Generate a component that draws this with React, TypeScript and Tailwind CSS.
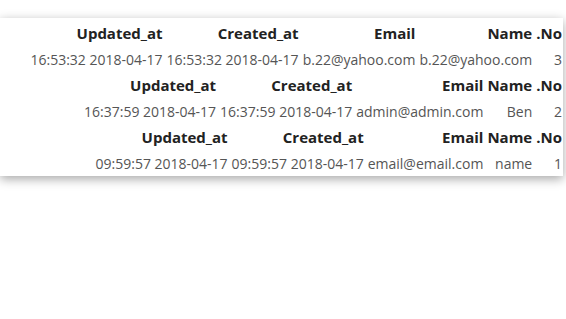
import React from 'react'

type Row = {
  no: string
  name: string
  email: string
  created: string
  updated: string
}

const rows: Row[] = [
  { no: '3', name: 'b.22@yahoo.com', email: 'b.22@yahoo.com', created: '2018-04-17 16:53:32', updated: '2018-04-17 16:53:32' },
  { no: '2', name: 'Ben', email: 'admin@admin.com', created: '2018-04-17 16:37:59', updated: '2018-04-17 16:37:59' },
  { no: '1', name: 'name', email: 'email@email.com', created: '2018-04-17 09:59:57', updated: '2018-04-17 09:59:57' },
]

function UserTable({ row }: { row: Row }) {
  const th = 'h-[26px] px-[2px] text-right text-[15px] font-bold text-[#222] whitespace-nowrap'
  const td = 'h-[26px] px-[2px] text-right text-[#555] whitespace-nowrap'
  return (
    <table dir="rtl" className="-mr-[1px] border-collapse">
      <thead>
        <tr>
          <th className={th}>No.</th>
          <th className={th}>Name</th>
          <th className={th}>Email</th>
          <th className={th}>Created_at</th>
          <th className={th}>Updated_at</th>
        </tr>
      </thead>
      <tbody>
        <tr>
          <td className={td}>{row.no}</td>
          <td className={td}>{row.name}</td>
          <td className={td}>{row.email}</td>
          <td className={td}>{row.created}</td>
          <td className={td}>{row.updated}</td>
        </tr>
      </tbody>
    </table>
  )
}

export default function App() {
  return (
    <div className="min-h-screen bg-white pt-[18px] overflow-hidden font-['Open_Sans',sans-serif] text-[14px]">
      <div className="mr-[3px] flex flex-col items-end overflow-hidden bg-white pt-[2px] shadow-[0_3px_10px_rgba(0,0,0,0.35)]">
        {rows.map((r) => (
          <UserTable key={r.no} row={r} />
        ))}
      </div>
    </div>
  )
}
